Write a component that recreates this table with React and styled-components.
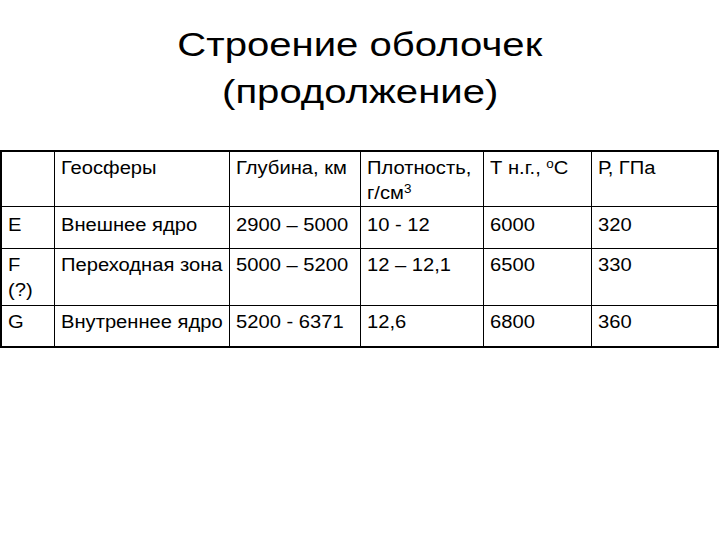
import React from "react";
import styled, { createGlobalStyle } from "styled-components";

const Global = createGlobalStyle`
  html, body { margin: 0; padding: 0; background: #fff; }
  body { font-family: "Liberation Sans", Arial, sans-serif; color: #000; }
`;

const Slide = styled.div`
  width: 720px;
  height: 540px;
  background: #fff;
  display: flex;
  flex-direction: column;
  overflow: hidden;
`;

const Title = styled.h1`
  margin: 0;
  padding-top: 21px;
  font-family: "Liberation Sans", Arial, sans-serif;
  font-weight: normal;
  font-size: 33px;
  line-height: 47px;
  text-align: center;
  color: #000;
`;

const TitleLine = styled.span`
  display: block;
  transform: scaleX(1.215);
  transform-origin: ${(p) => p.$origin} center;
`;

const Table = styled.table`
  margin-top: 35px;
  width: 717px;
  border-collapse: collapse;
  table-layout: fixed;
  border: 2px solid #000;
  font-family: "Liberation Sans", Arial, sans-serif;
  font-size: 18px;
  line-height: 25px;
`;

const Row = styled.tr`
  height: ${(p) => p.$h}px;
`;

const Cell = styled.td`
  border: 1px solid #000;
  vertical-align: top;
  padding: ${(p) => p.$pt ?? 4}px 4px 0 6px;
  white-space: nowrap;
  overflow: visible;
`;

const CellText = styled.span`
  display: inline-block;
  transform: scaleX(1.12);
  transform-origin: left top;
`;

const Sup = styled.sup`
  font-size: 12px;
  line-height: 0;
  vertical-align: 6px;
`;

const cols = [53, 175, 131, 123, 108, 127];

const rows = [
  { h: 55, pt: 4, cells: ["", "Геосферы", "Глубина, км", <>Плотность,<br />г/см<Sup>3</Sup></>, <>Т н.г., <Sup>o</Sup>С</>, "Р, ГПа"] },
  { h: 42, pt: 6, cells: ["E", "Внешнее ядро", "2900 – 5000", "10 - 12", "6000", "320"] },
  { h: 57, pt: 4, cells: [<>F<br />(?)</>, "Переходная зона", "5000 – 5200", "12 – 12,1", "6500", "330"] },
  { h: 41, pt: 4, cells: ["G", "Внутреннее ядро", "5200 - 6371", "12,6", "6800", "360"] },
];

export default function App() {
  return (
    <Slide>
      <Global />
      <Title>
        <TitleLine $origin="361px">Строение оболочек</TitleLine>
        <TitleLine $origin="359px">(продолжение)</TitleLine>
      </Title>
      <Table>
        <colgroup>
          {cols.map((w, i) => (
            <col key={i} style={{ width: w }} />
          ))}
        </colgroup>
        <tbody>
          {rows.map((r, i) => (
            <Row key={i} $h={r.h}>
              {r.cells.map((c, j) => (
                <Cell key={j} $pt={r.pt}>
                  {c !== "" && <CellText>{c}</CellText>}
                </Cell>
              ))}
            </Row>
          ))}
        </tbody>
      </Table>
    </Slide>
  );
}
